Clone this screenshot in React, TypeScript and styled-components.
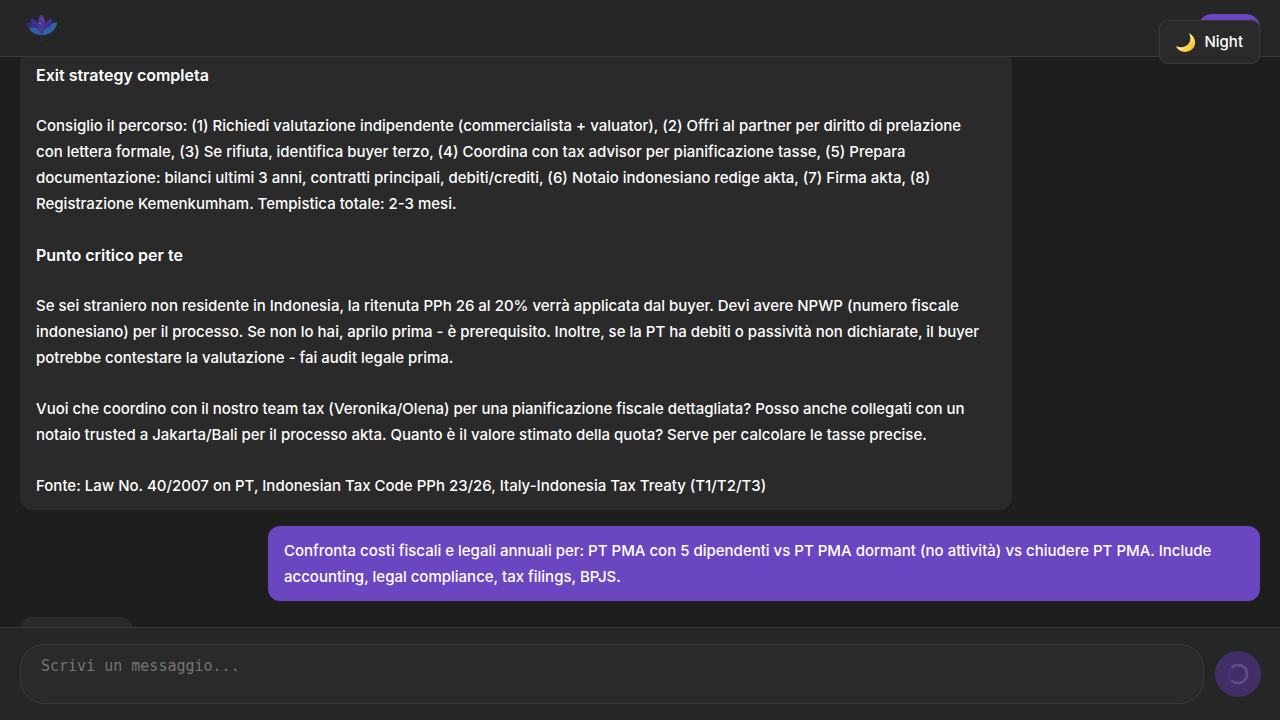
import React from "react";
import styled, { createGlobalStyle } from "styled-components";

const GlobalStyle = createGlobalStyle`
  * { box-sizing: border-box; }
  body {
    margin: 0;
    background: #1e1e1e;
    color: #ffffff;
    font-family: Inter, "Liberation Sans", sans-serif;
    font-size: 15px;
    font-weight: 500;
    line-height: 26px;
  }
`;

const Page = styled.div`
  display: flex;
  flex-direction: column;
  height: 100vh;
  overflow: hidden;
`;

const Header = styled.header`
  display: flex;
  align-items: center;
  justify-content: space-between;
  padding: 14px 20px;
  background: #262626;
  border-bottom: 1px solid #3a3a3a;
`;

const Logo = styled.svg`
  display: block;
  width: 44px;
  height: 28px;
  overflow: visible;
`;

const AccountButton = styled.button`
  width: 62px;
  height: 28px;
  border: 0;
  border-radius: 14px;
  background: #6b46c1;
`;

const ThemeToggle = styled.button`
  position: fixed;
  top: 20px;
  right: 20px;
  z-index: 2;
  display: flex;
  align-items: center;
  gap: 8px;
  height: 44px;
  padding: 0 16px;
  border: 1px solid #3a3a3a;
  border-radius: 8px;
  background: #2a2a2a;
  color: #ffffff;
  font: inherit;
`;

const MoonIcon = styled.svg`
  width: 20px;
  height: 20px;
`;

const Conversation = styled.main`
  flex: 1;
  min-height: 0;
  display: flex;
  flex-direction: column;
  justify-content: flex-end;
  overflow: hidden;
`;

const Thread = styled.div`
  display: flex;
  flex-direction: column;
  gap: 16px;
  padding: 0 20px;
  margin-bottom: -40px;
`;

const Bubble = styled.article<{ $own?: boolean }>`
  display: flex;
  flex-direction: column;
  gap: 25px;
  max-width: 80%;
  padding: 12px 16px 11px;
  border-radius: 12px;
  align-self: ${(p) => (p.$own ? "flex-end" : "flex-start")};
  background: ${(p) => (p.$own ? "#6b46c1" : "#2a2a2a")};
`;

const Paragraph = styled.p`
  margin: 0;
`;

const Heading = styled.h2`
  margin: 0;
  font-size: 16px;
  font-weight: 600;
`;

const TypingBubble = styled.div`
  width: 113px;
  height: 50px;
  border-radius: 12px;
  background: #2a2a2a;
`;

const Composer = styled.form`
  position: relative;
  display: flex;
  align-items: center;
  gap: 12px;
  padding: 16px 20px;
  background: #262626;
  border-top: 1px solid #3a3a3a;
`;

const MessageInput = styled.textarea`
  flex: 1;
  min-width: 0;
  height: 60px;
  padding: 12px 20px;
  border: 1px solid #3a3a3a;
  border-radius: 24px;
  background: #2a2a2a;
  color: #ffffff;
  font-family: "DejaVu Sans Mono", monospace;
  font-size: 15px;
  line-height: 18px;
  resize: none;
  outline: none;

  &::placeholder {
    color: #757575;
    opacity: 1;
  }
`;

const SendButton = styled.button`
  display: flex;
  align-items: center;
  justify-content: center;
  width: 44px;
  height: 44px;
  padding: 0;
  border: 0;
  border-radius: 50%;
  background: #432f67;
  transform: scale(1.05);
`;

const LotusLogo = () => (
  <Logo viewBox="0 0 44 28" role="img" aria-label="Logo">
    <path d="M21.500 20V28" stroke="#35296a" strokeWidth="1" />
    <path d="M6 8.500C12 8 18 13 21.500 21C13 21 9 17 6 8.500Z" fill="#3c2a80" />
    <path d="M37.500 8.500C31 8 25 13 21.500 21C30 21 35 17 37.500 8.500Z" fill="#2b66a4" />
    <path d="M11 4C17 6 21 12 21.500 21C14 18 11 12 11 4Z" fill="#3f2f90" />
    <path d="M32 4C26 6 22 12 21.500 21C29 18 32 12 32 4Z" fill="#40318f" />
    <path d="M9 14C15 12 20 15 21.500 21C15 21 11 18 9 14Z" fill="#2b63a2" />
    <path d="M34 14C28 12 23 15 21.500 21C28 21 32 18 34 14Z" fill="#2c66a8" />
    <path d="M21.500 0C26 4 27 14 21.500 21C16 14 17 4 21.500 0Z" fill="#4f3492" />
    <path d="M21.500 9C23 12 23 16 21.500 21C20 16 20 12 21.500 9Z" fill="#3e3f9c" />
    <path d="M21 4h1v1h-1zM23 6h1v1h-1zM19 9h2v1h-2z" fill="#5a7fc0" />
  </Logo>
);

const Moon = () => (
  <MoonIcon viewBox="0 0 20 20" aria-hidden="true">
    <defs>
      <linearGradient id="moon" x1="0" y1="0" x2="1" y2="1">
        <stop offset="0.4" stopColor="#fff0a0" />
        <stop offset="0.8" stopColor="#fbc62f" />
      </linearGradient>
    </defs>
    <path
      d="M13 1C20 5 22 14 14 18.800C8 21.500 2 19 0 14C8 18 18 12 13 1Z"
      fill="url(#moon)"
    />
  </MoonIcon>
);

const Spinner = () => (
  <svg width="20" height="20" viewBox="0 0 20 20" fill="none" aria-hidden="true">
    <circle cx="10" cy="10" r="8.700" stroke="#482f7c" strokeWidth="2.600" />
    <path d="M3.850 3.850A8.700 8.700 0 1 1 3.850 16.150" stroke="#5f4c81" strokeWidth="2.600" />
  </svg>
);

export default function App() {
  return (
    <Page>
      <GlobalStyle />
      <Header>
        <LotusLogo />
        <AccountButton type="button" aria-label="Account" />
      </Header>
      <ThemeToggle type="button">
        <Moon />
        Night
      </ThemeToggle>
      <Conversation>
        <Thread>
          <Bubble>
            <Heading>Exit strategy completa</Heading>
            <Paragraph>
              Consiglio il percorso: (1) Richiedi valutazione indipendente (commercialista +
              valuator), (2) Offri al partner per diritto di prelazione
              <br />
              con lettera formale, (3) Se rifiuta, identifica buyer terzo, (4) Coordina con tax
              advisor per pianificazione tasse, (5) Prepara
              <br />
              documentazione: bilanci ultimi 3 anni, contratti principali, debiti/crediti, (6)
              Notaio indonesiano redige akta, (7) Firma akta, (8) Registrazione Kemenkumham.
              Tempistica totale: 2-3 mesi.
            </Paragraph>
            <Heading>Punto critico per te</Heading>
            <Paragraph>
              Se sei straniero non residente in Indonesia, la ritenuta PPh 26 al 20% verrà
              applicata dal buyer. Devi avere NPWP (numero fiscale indonesiano) per il processo.
              Se non lo hai, aprilo prima - è prerequisito. Inoltre, se la PT ha debiti o
              passività non dichiarate, il buyer potrebbe contestare la valutazione - fai audit
              legale prima.
            </Paragraph>
            <Paragraph>
              Vuoi che coordino con il nostro team tax (Veronika/Olena) per una pianificazione
              fiscale dettagliata? Posso anche collegati con un notaio trusted a Jakarta/Bali per
              il processo akta. Quanto è il valore stimato della quota? Serve per calcolare le
              tasse precise.
            </Paragraph>
            <Paragraph>
              Fonte: Law No. 40/2007 on PT, Indonesian Tax Code PPh 23/26, Italy-Indonesia Tax
              Treaty (T1/T2/T3)
            </Paragraph>
          </Bubble>
          <Bubble $own>
            <Paragraph>
              Confronta costi fiscali e legali annuali per: PT PMA con 5 dipendenti vs PT PMA
              dormant (no attività) vs chiudere PT PMA. Include accounting, legal compliance, tax
              filings, BPJS.
            </Paragraph>
          </Bubble>
          <TypingBubble />
        </Thread>
      </Conversation>
      <Composer>
        <MessageInput aria-label="Messaggio" placeholder="Scrivi un messaggio..." />
        <SendButton type="button" aria-label="Invia">
          <Spinner />
        </SendButton>
      </Composer>
    </Page>
  );
}
